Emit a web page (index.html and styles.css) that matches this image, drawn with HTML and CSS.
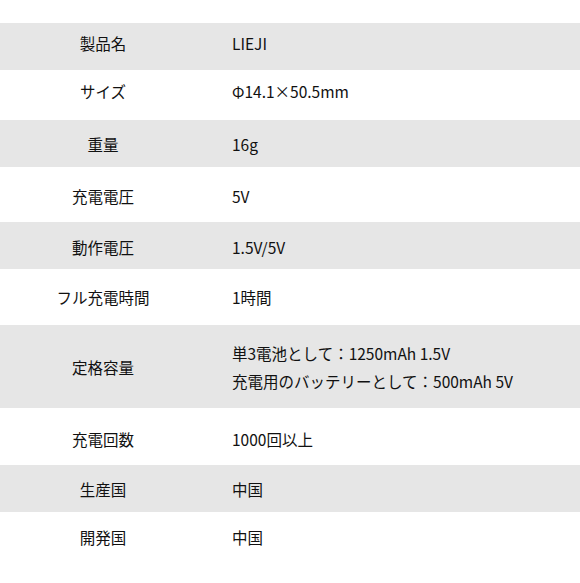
FILE: index.html
```html
<!DOCTYPE html>
<html lang="ja">
<head>
<meta charset="utf-8">
<title>仕様</title>
<link rel="stylesheet" href="styles.css">
</head>
<body>
<div class="spec">
  <div class="row alt"><div class="label">製品名</div><div class="value">LIEJI</div></div>
  <div class="row"><div class="label">サイズ</div><div class="value">Φ14.1×50.5mm</div></div>
  <div class="row alt"><div class="label">重量</div><div class="value">16g</div></div>
  <div class="row"><div class="label">充電電圧</div><div class="value">5V</div></div>
  <div class="row alt"><div class="label">動作電圧</div><div class="value">1.5V/5V</div></div>
  <div class="row"><div class="label">フル充電時間</div><div class="value">1時間</div></div>
  <div class="row alt multi"><div class="label">定格容量</div><div class="value">単3電池として：1250mAh 1.5V<br>充電用のバッテリーとして：500mAh 5V</div></div>
  <div class="row"><div class="label">充電回数</div><div class="value">1000回以上</div></div>
  <div class="row alt"><div class="label">生産国</div><div class="value">中国</div></div>
  <div class="row"><div class="label">開発国</div><div class="value">中国</div></div>
</div>
</body>
</html>
```
FILE: styles.css
```css
html, body {
  margin: 0;
  padding: 0;
  background: #ffffff;
}
body {
  font-family: "Noto Sans CJK JP", "Noto Sans", sans-serif;
  font-size: 15.5px;
  font-weight: 400;
  line-height: 20px;
  color: #111111;
}
.spec {
  padding-top: 23px;
}
.row {
  display: grid;
  grid-template-columns: 206px 1fr;
  align-items: start;
  box-sizing: border-box;
  height: 47px;
  padding-top: 14.5px;
}
.row.alt {
  background: #e6e6e6;
}
.label {
  text-align: center;
}
.value {
  padding-left: 26px;
}
.multi {
  align-items: center;
  padding-top: 0;
}
.multi .value {
  line-height: 28px;
}
.row:nth-child(1) { height: 47px; padding-top: 9.5px; }
.row:nth-child(2) { height: 50px; padding-top: 11px; }
.row:nth-child(3) { height: 47px; padding-top: 14px; }
.row:nth-child(4) { height: 55px; padding-top: 19px; }
.row:nth-child(5) { height: 47px; padding-top: 14.5px; }
.row:nth-child(6) { height: 56px; padding-top: 18px; }
.row:nth-child(7) { height: 83px; padding-top: 0; }
.row:nth-child(8) { height: 57px; padding-top: 21px; }
.row:nth-child(9) { height: 47px; padding-top: 14px; }
.row:nth-child(10) { height: 71px; padding-top: 15px; }
```
